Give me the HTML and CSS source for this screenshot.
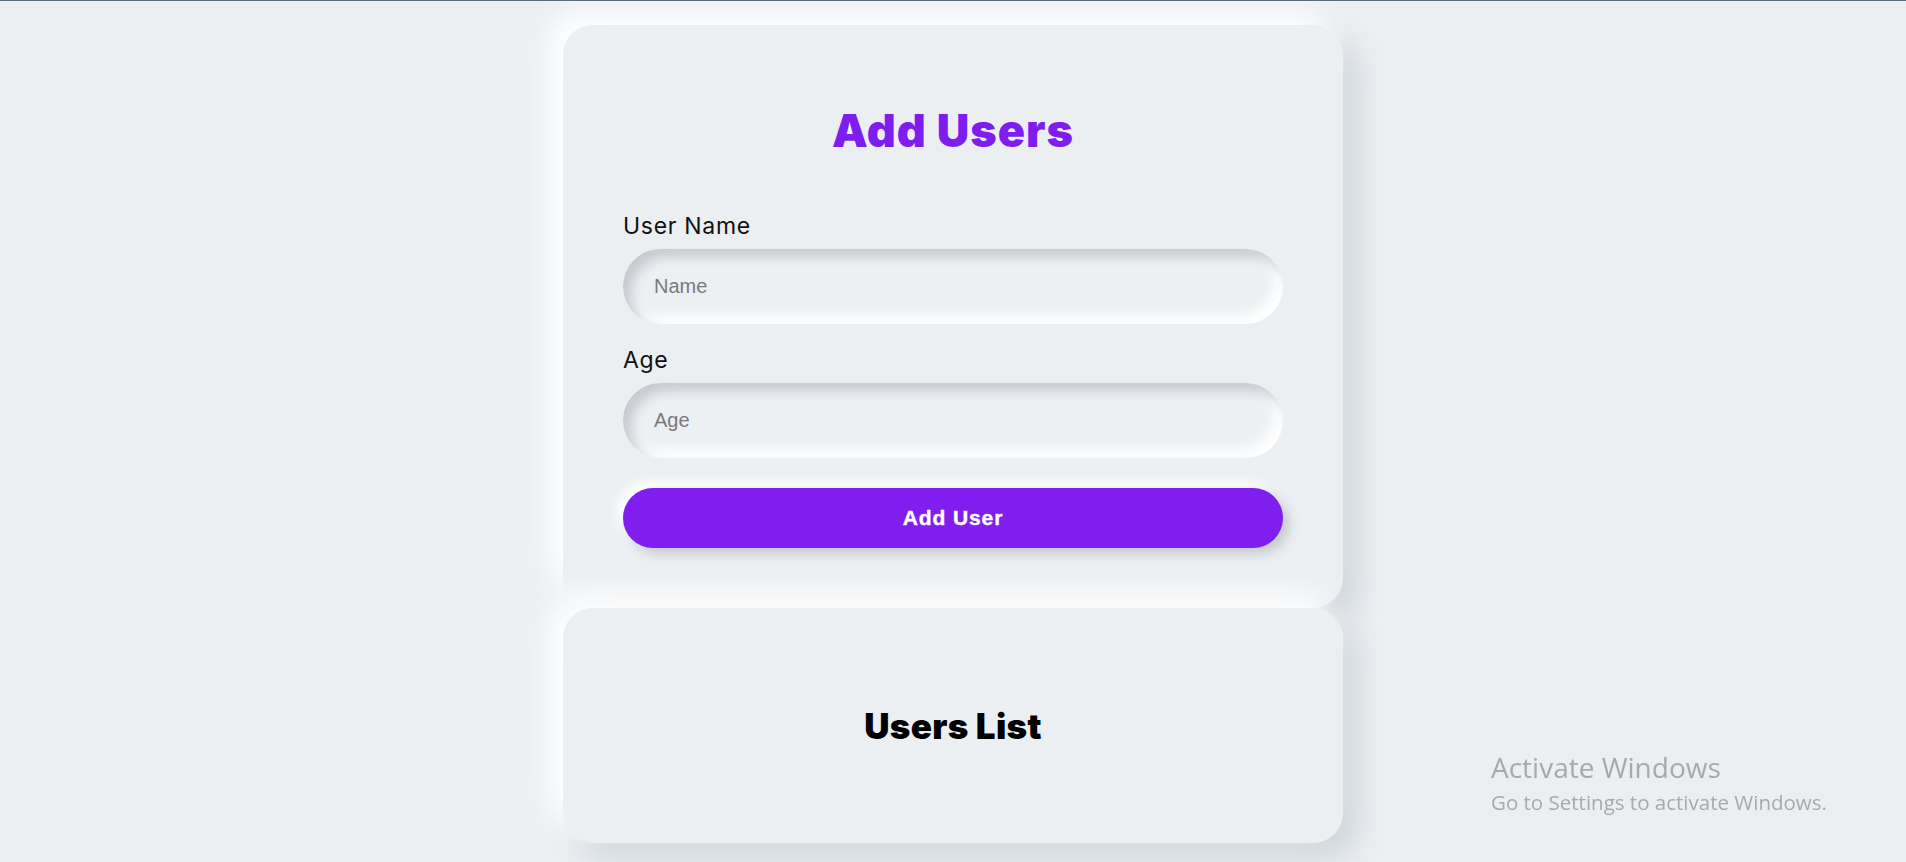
FILE: index.html
```html
<!DOCTYPE html>
<html lang="en">
<head>
<meta charset="utf-8">
<title>Users</title>
<link rel="stylesheet" href="styles.css">
</head>
<body>
  <main class="page">
    <section class="card card-form">
      <h1 class="title">Add Users</h1>
      <form class="form">
        <div class="field">
          <label class="label" for="name">User Name</label>
          <input class="input" id="name" type="text" placeholder="Name">
        </div>
        <div class="field">
          <label class="label" for="age">Age</label>
          <input class="input" id="age" type="text" placeholder="Age">
        </div>
        <button class="btn" type="button">Add User</button>
      </form>
    </section>
    <section class="card card-list">
      <h2 class="list-title">Users List</h2>
    </section>
  </main>
  <div class="watermark">
    <div class="wm-title">Activate Windows</div>
    <div class="wm-sub">Go to Settings to activate Windows.</div>
  </div>
</body>
</html>
```
FILE: styles.css
```css
html, body {
  margin: 0;
  padding: 0;
}
body {
  background: #ebeff2;
  border-top: 1px solid #5c6c7f;
  height: 861px;
  overflow: hidden;
  font-family: "Inter", "Liberation Sans", sans-serif;
}
.page {
  display: flex;
  flex-direction: column;
  align-items: center;
  padding-top: 24px;
}
.card {
  width: 780px;
  box-sizing: border-box;
  background: #eceff2;
  border-radius: 30px;
  box-shadow: -14px -14px 30px #ffffff, 14px 14px 30px #cdd3d9;
}
.card-form {
  padding: 79px 60px 60px;
}
.title {
  margin: 0 0 54px;
  text-align: center;
  font-family: "Inter", sans-serif;
  font-weight: 900;
  font-size: 45px;
  line-height: 54px;
  color: #7d1eef;
  letter-spacing: 1px;
}
.form {
  display: flex;
  flex-direction: column;
  gap: 22px;
}
.field {
  display: flex;
  flex-direction: column;
}
.label {
  font-family: "Inter", sans-serif;
  font-size: 23px;
  line-height: 28px;
  color: #111;
  margin-bottom: 9px;
  letter-spacing: 0.7px;
}
.input {
  height: 75px;
  box-sizing: border-box;
  border: none;
  outline: none;
  border-radius: 38px;
  background: #edf0f3;
  padding: 0 30px 0 31px;
  font-family: "Liberation Sans", Arial, sans-serif;
  font-size: 20px;
  color: #333;
  box-shadow: inset 8px 8px 12px #c6cbd0, inset -8px -8px 12px #ffffff;
}
.input::placeholder {
  color: #7a7a7a;
}
.btn {
  margin-top: 8px;
  height: 60px;
  border: none;
  border-radius: 30px;
  background: #801ef0;
  color: #fff;
  font-family: "Liberation Sans", Arial, sans-serif;
  font-weight: 700;
  font-size: 21px;
  letter-spacing: 0.9px;
  -webkit-text-stroke: 0.4px #fff;
  box-shadow: 6px 6px 12px #c4c9cf, -6px -6px 12px #ffffff;
  cursor: pointer;
}
.card-list {
  height: 235px;
  display: flex;
  align-items: center;
  justify-content: center;
}
.list-title {
  margin: 0;
  font-family: "Inter", sans-serif;
  font-weight: 900;
  font-size: 35px;
  line-height: 44px;
  color: #000;
  letter-spacing: 0.3px;
}
.watermark {
  position: fixed;
  left: 1491px;
  top: 749px;
  color: #a6aaae;
  font-family: "Open Sans", "Noto Sans", sans-serif;
}
.wm-title {
  font-size: 28px;
  line-height: 36px;
}
.wm-sub {
  margin-top: 3px;
  font-size: 20.5px;
  line-height: 28px;
}
```
